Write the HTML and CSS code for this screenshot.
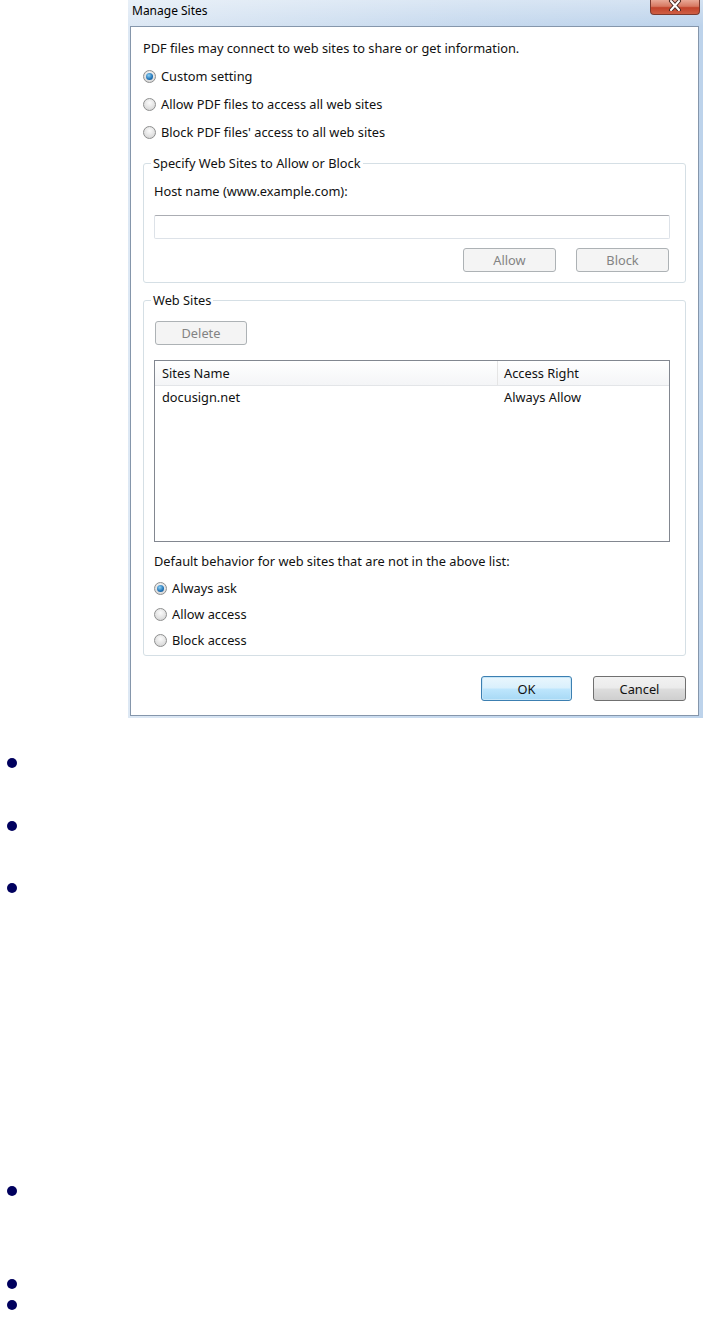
FILE: index.html
```html
<!DOCTYPE html>
<html lang="en">
  <head>
    <meta charset="UTF-8" />
    <title>Manage Sites</title>
    <link rel="stylesheet" href="styles.css">
  </head>
  <body>
    <div class="dialog">
      <div class="titlebar">
        <span class="title">Manage Sites</span>
        <div class="close-btn">
          <svg width="16" height="11" viewBox="0 0 16 11">
            <path d="M4 1 L12 10 M12 1 L4 10" stroke="#4a2a24" stroke-width="4" stroke-linecap="round" fill="none" />
            <path d="M4 1 L12 10 M12 1 L4 10" stroke="#fff" stroke-width="2" stroke-linecap="round" fill="none" />
          </svg>
        </div>
      </div>

      <div class="client">
        <p class="row">PDF files may connect to web sites to share or get information.</p>
        <div class="row radio-row"><span class="radio checked"></span>Custom setting</div>
        <div class="row radio-row"><span class="radio"></span>Allow PDF files to access all web sites</div>
        <div class="row radio-row"><span class="radio"></span>Block PDF files' access to all web sites</div>

        <fieldset class="group group-specify">
          <legend>Specify Web Sites to Allow or Block</legend>
          <div class="label">Host name (www.example.com):</div>
          <div class="textbox"></div>
          <div class="btn-row">
            <button class="btn" disabled>Allow</button>
            <button class="btn" disabled>Block</button>
          </div>
        </fieldset>

        <fieldset class="group group-sites">
          <legend>Web Sites</legend>
          <button class="btn btn-delete" disabled>Delete</button>
          <div class="listview">
            <div class="lv-header">
              <span class="col-name">Sites Name</span>
              <span class="col-right">Access Right</span>
            </div>
            <div class="lv-row">
              <span class="col-name">docusign.net</span>
              <span class="col-right">Always Allow</span>
            </div>
          </div>
          <p class="label default-label">Default behavior for web sites that are not in the above list:</p>
          <div class="small-row radio-row"><span class="radio checked"></span>Always ask</div>
          <div class="small-row radio-row"><span class="radio"></span>Allow access</div>
          <div class="small-row radio-row"><span class="radio"></span>Block access</div>
        </fieldset>

        <div class="footer">
          <button class="btn btn-big btn-default">OK</button>
          <button class="btn btn-big">Cancel</button>
        </div>
      </div>
    </div>

    <ul class="notes">
      <li class="note"></li>
      <li class="note"></li>
      <li class="note note-short"></li>
      <li class="note note-break"></li>
      <li class="note note-spaced"></li>
      <li class="note note-tight"></li>
    </ul>
  </body>
</html>
```

FILE: styles.css
```css
body {
  margin: 0;
  background: #fff;
  font-family: "Noto Sans", "DejaVu Sans", sans-serif;
  font-size: 12.8px;
  color: #111;
}

/* dialog window */
.dialog {
  margin-left: 128px;
  width: 575px;
  padding-bottom: 2px;
  background: linear-gradient(to right, #dde8f4, #c6d9ee 60%, #bdd3eb);
}

.titlebar {
  height: 26px;
  display: flex;
  align-items: flex-start;
  justify-content: space-between;
  padding-left: 4px;
  background: linear-gradient(to bottom, rgba(255, 255, 255, 0.35), rgba(255, 255, 255, 0));
}

.title {
  font-size: 12px;
  line-height: 21px;
  color: #000;
}

.close-btn {
  width: 50px;
  height: 15px;
  margin-right: 3px;
  box-sizing: border-box;
  border: 1px solid #7b3a2f;
  border-top: none;
  border-radius: 0 0 4px 4px;
  background: linear-gradient(#e9a896, #d77962 45%, #c2432b 55%, #cf5f44);
  display: flex;
  justify-content: center;
  align-items: flex-start;
}

.client {
  margin-left: 2px;
  width: 569px;
  box-sizing: border-box;
  border: 1px solid #8596ab;
  background: #fff;
  padding: 7px 12px 14px 12px;
}

.row {
  margin: 0;
  height: 28px;
  line-height: 28px;
}

.radio-row {
  display: flex;
  align-items: center;
  gap: 5px;
}

.radio {
  width: 13px;
  height: 13px;
  box-sizing: border-box;
  border-radius: 50%;
  border: 1px solid #8e8f8f;
  background: radial-gradient(circle at 50% 35%, #fbfbfb, #e3e3e3 55%, #cdcdcd);
  display: flex;
  justify-content: center;
  align-items: center;
  flex-shrink: 0;
}

.radio.checked::after {
  content: "";
  width: 7px;
  height: 7px;
  border-radius: 50%;
  background: radial-gradient(circle at 40% 35%, #8fd2f5, #1f72b6 60%, #0c4a85);
}

/* group boxes */
.group {
  margin: 9px 0 0;
  min-width: 0;
  border: 1px solid #d5dfe5;
  border-radius: 3px;
  padding: 12px 15px 10px 10px;
}

.group legend {
  padding: 0 2px;
  margin-left: -3px;
  line-height: 16px;
}

.group-sites {
  padding-top: 13px;
  padding-bottom: 2px;
}

.label {
  margin: 0;
  line-height: 16px;
}

.textbox {
  margin-top: 16px;
  height: 24px;
  box-sizing: border-box;
  border: 1px solid #dde2e8;
  border-top-color: #abadb3;
  border-radius: 2px;
}

.btn-row {
  margin-top: 9px;
  display: flex;
  justify-content: flex-end;
  gap: 20px;
  padding-right: 1px;
}

.btn {
  width: 93px;
  height: 24px;
  box-sizing: border-box;
  font-family: inherit;
  font-size: 12.8px;
  color: #111;
  border: 1px solid #707070;
  border-radius: 3px;
  background: linear-gradient(#f2f2f2, #ebebeb 48%, #dddddd 52%, #cfcfcf);
  padding: 0;
}

.btn:disabled {
  color: #838383;
  border-color: #adb2b5;
  background: #f4f4f4;
}

.btn-delete {
  display: block;
  width: 92px;
  margin-left: 1px;
}

.btn-big {
  height: 25px;
}

.btn-default {
  width: 91px;
  border-color: #3c7fb1;
  background: linear-gradient(#eaf6fd, #d9f0fc 48%, #bee6fd 52%, #a7d9f5);
  box-shadow: inset 0 0 0 1px #c6e6f8;
}

/* list view */
.listview {
  margin-top: 15px;
  height: 182px;
  box-sizing: border-box;
  border: 1px solid #828790;
}

.lv-header,
.lv-row {
  display: flex;
}

.lv-header {
  height: 25px;
  line-height: 24px;
  box-sizing: border-box;
  border-bottom: 1px solid #e3e5e8;
  background: linear-gradient(#ffffff, #f4f5f7);
}

.lv-row {
  height: 22px;
  line-height: 22px;
}

.col-name {
  width: 343px;
  box-sizing: border-box;
  padding-left: 7px;
}

.lv-header .col-name {
  border-right: 1px solid #e5e5e5;
}

.col-right {
  padding-left: 6px;
}

.default-label {
  margin-top: 11px;
}

.small-row {
  height: 26px;
}

.group-sites .label + .small-row {
  margin-top: 6px;
}

.footer {
  margin-top: 20px;
  display: flex;
  justify-content: flex-end;
  gap: 21px;
}

/* bullet list below the screenshot */
.notes {
  list-style: none;
  margin: 34px 0 0;
  padding: 0;
}

.note {
  height: 21px;
  padding-left: 7px;
  display: flex;
  align-items: center;
}

.note::before {
  content: "";
  width: 10px;
  height: 10px;
  border-radius: 50%;
  background: #00005e;
}

.note + .note {
  margin-top: 42px;
}

.note + .note-short {
  margin-top: 41px;
}

.note + .note-break {
  margin-top: 282px;
}

.note + .note-spaced {
  margin-top: 72px;
}

.note + .note-tight {
  margin-top: 0;
}
```
